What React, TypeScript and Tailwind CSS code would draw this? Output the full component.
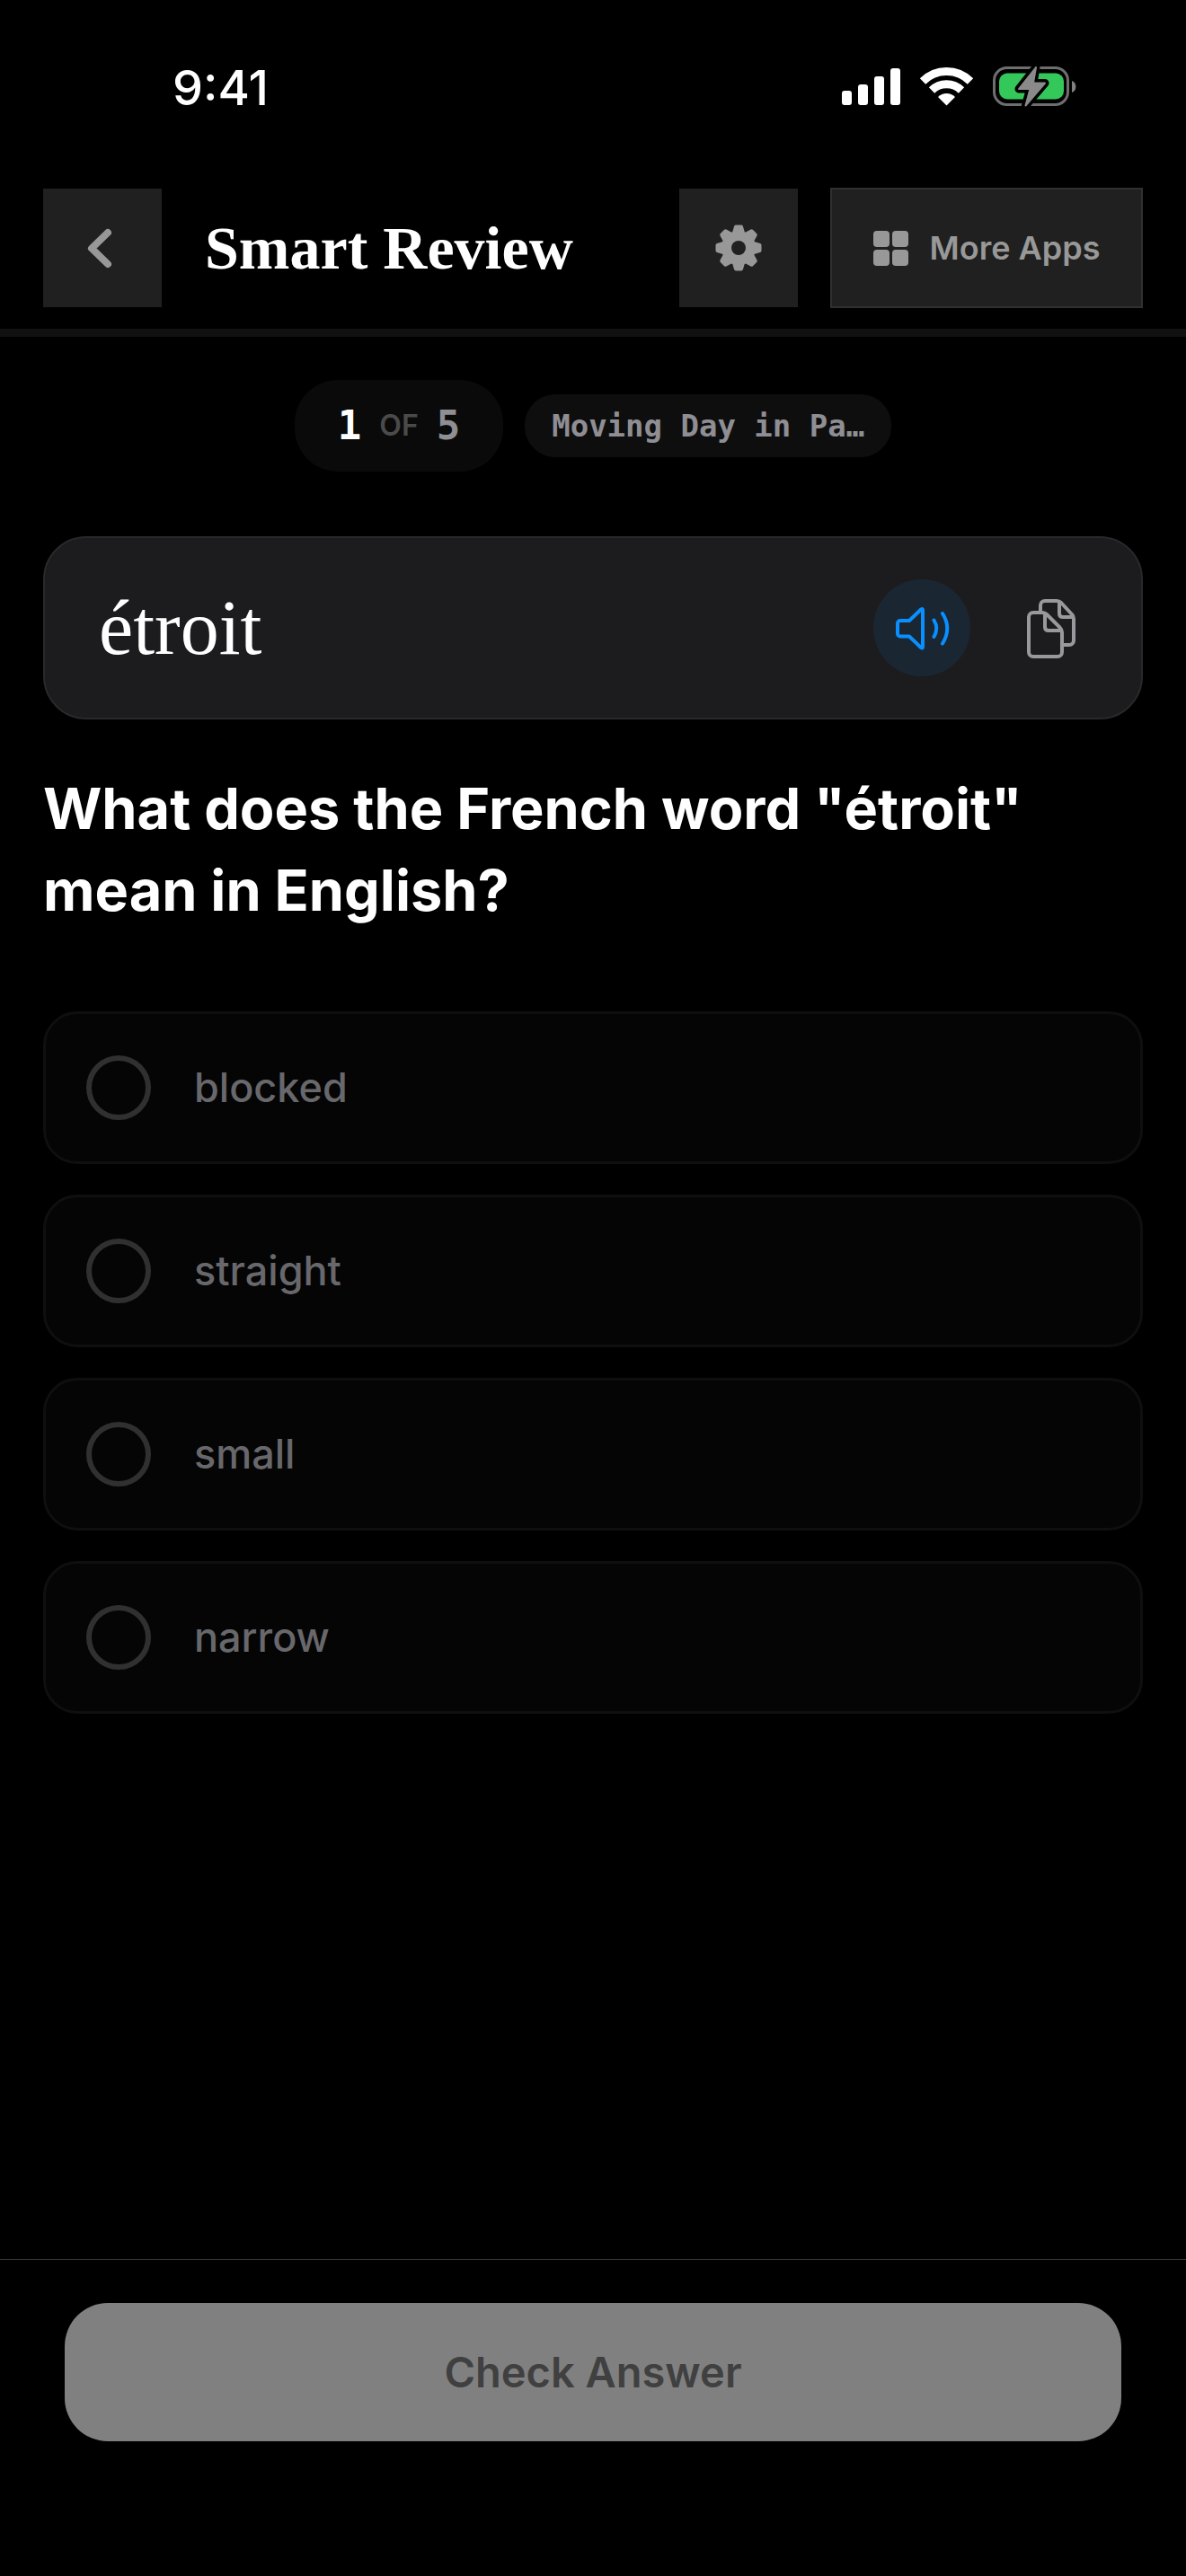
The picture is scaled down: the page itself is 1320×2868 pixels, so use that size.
import { useState } from "react";

const options = ["blocked", "straight", "small", "narrow"];

const StatusBar = () => {
  return (
    <div className="flex items-center justify-between pl-48 pr-[120px] pt-[68px]">
      <span className="text-[54px] leading-[60px] font-medium">9:41</span>
      <svg width="264" height="52" viewBox="0 0 264 52" aria-hidden="true">
        <g fill="#fff">
          <rect x="1" y="29" width="11" height="16" rx="3" />
          <rect x="19" y="22" width="11" height="23" rx="3" />
          <rect x="37" y="13" width="11" height="32" rx="3" />
          <rect x="55" y="4" width="11" height="41" rx="3" />
        </g>
        <g fill="none" stroke="#fff" strokeWidth="9">
          <path d="M91 18.500A37.500 37.500 0 0 1 144 18.500" />
          <path d="M101 28.500A23.500 23.500 0 0 1 134 28.500" />
        </g>
        <path d="M117.500 45.500L108 36A13.500 13.500 0 0 1 127 36Z" fill="#fff" />
        <rect x="170.500" y="3.500" width="82" height="41" rx="14" fill="none" stroke="#6e6e6e" strokeWidth="3" />
        <rect x="176" y="9.500" width="72" height="29" rx="9" fill="#34c759" />
        <path d="M257 18a7 7 0 0 1 0 13z" fill="#808080" />
        <path
          d="M217 3L198 27H210.500L205.500 45.500L227 20.500H214Z"
          fill="#8a8a8a"
          stroke="#000"
          strokeWidth="9"
          strokeLinejoin="round"
          paintOrder="stroke"
        />
        <path
          d="M217 3L198 27H210.500L205.500 45.500L227 20.500H214Z"
          fill="#8a8a8a"
          stroke="#8a8a8a"
          strokeWidth="2"
          strokeLinejoin="round"
        />
      </svg>
    </div>
  );
};

const Header = () => {
  return (
    <header className="flex items-center border-b-9 border-[#111111] px-12 pt-[81px] pb-[23px]">
      <button
        type="button"
        aria-label="Back"
        className="flex size-[132px] shrink-0 items-center justify-center bg-[#202020] text-[#989898]"
      >
        <svg width="48" height="48" viewBox="0 0 48 48" fill="none" aria-hidden="true">
          <path d="M30 7L12 24.500L30 42" stroke="currentColor" strokeWidth="8" strokeLinecap="round" strokeLinejoin="round" />
        </svg>
      </button>
      <h1 className="ml-12 flex-1 font-['Liberation_Serif',serif] text-[68px] leading-[80px] font-bold whitespace-nowrap">
        Smart Review
      </h1>
      <button
        type="button"
        aria-label="Settings"
        className="flex size-[132px] shrink-0 items-center justify-center bg-[#202020] text-[#989898]"
      >
        <svg width="52" height="52" viewBox="0 0 52 52" aria-hidden="true">
          <mask id="gear-hole">
            <rect width="52" height="52" fill="#fff" />
            <circle cx="26" cy="26" r="8" fill="#000" />
          </mask>
          <g fill="currentColor" stroke="currentColor" strokeLinejoin="round" mask="url(#gear-hole)">
            <circle cx="26" cy="26" r="18" strokeWidth="2" />
            {[0, 45, 90, 135, 180, 225, 270, 315].map((angle) => (
              <path key={angle} d="M23 2.500H29L31.500 11H20.500Z" strokeWidth="4" transform={`rotate(${angle} 26 26)`} />
            ))}
          </g>
        </svg>
      </button>
      <button
        type="button"
        className="ml-9 flex h-[134px] w-[348px] shrink-0 items-center justify-center gap-6 border-2 border-[#303030] bg-[#202020] text-[36px] font-semibold whitespace-nowrap text-[#989898]"
      >
        <svg width="39" height="39" viewBox="0 0 39 39" fill="currentColor" aria-hidden="true">
          <rect width="18" height="18" rx="4" />
          <rect x="21" width="18" height="18" rx="4" />
          <rect y="21" width="18" height="18" rx="4" />
          <rect x="21" y="21" width="18" height="18" rx="4" />
        </svg>
        More Apps
      </button>
    </header>
  );
};

const Progress = () => {
  return (
    <div className="flex items-center justify-center gap-6 font-['DejaVu_Sans_Mono',monospace] font-bold">
      <p className="flex h-[102px] items-center gap-5 rounded-[48px] bg-[#0a0a0a] px-12 text-[44px] leading-[52px]">
        <span>1</span>
        <span className="font-['Inter',sans-serif] text-[32px] font-semibold text-[#4a4a4a]">OF</span>
        <span className="text-[#8e8e93]">5</span>
      </p>
      <p className="flex h-[70px] items-center rounded-[34px] bg-[#0e0e0f] px-[30px] text-[34px] leading-10 text-[#8e8e93]">
        Moving Day in Pa…
      </p>
    </div>
  );
};

const WordCard = () => {
  return (
    <section className="mt-[72px] flex items-center rounded-[48px] border-2 border-[#29292b] bg-[#1c1c1e] py-[46px] pr-[46px] pl-[60px]">
      <span lang="fr" className="flex-1 font-['Liberation_Serif',serif] text-[86px] leading-[96px]">
        étroit
      </span>
      <button
        type="button"
        aria-label="Listen"
        className="flex size-[108px] items-center justify-center rounded-full bg-[#1a2733] text-[#0a8fff]"
      >
        <svg width="64" height="52" viewBox="0 0 64 52" fill="none" stroke="currentColor" strokeWidth="4" strokeLinecap="round" strokeLinejoin="round" aria-hidden="true">
          <path d="M5 21a3 3 0 0 1 3-3h10L31 5.500q2-1.500 2 1V47q0 2.500-2 1L18 35.500H8a3 3 0 0 1-3-3Z" />
          <path d="M45.500 17.500q5.500 9 0 18.500M55 10q10.500 16.500 0 33.500" />
        </svg>
      </button>
      <button
        type="button"
        aria-label="Copy"
        className="ml-9 flex size-[108px] items-center justify-center text-[#98989d]"
      >
        <svg width="56" height="68" viewBox="0 0 56 68" fill="none" stroke="currentColor" strokeWidth="4" strokeLinejoin="round" aria-hidden="true">
          <path d="M16 16V9a5 5 0 0 1 5-5h13q3 0 5 2l12 13q2 2 2 5v24a5 5 0 0 1-5 5h-7" />
          <path d="M37 5v13q0 4 4 4h12" />
          <path d="M3 22a5 5 0 0 1 5-5h10q3 0 5 2l14 14q3 3 3 6v22a5 5 0 0 1-5 5H8a5 5 0 0 1-5-5Z" />
          <path d="M21 18v15q0 4 4 4h15" />
        </svg>
      </button>
    </section>
  );
};

const App = () => {
  const [selected, setSelected] = useState("");

  return (
    <div className="flex min-h-screen flex-col bg-black font-['Inter',sans-serif] text-white">
      <StatusBar />
      <Header />

      <main className="flex-1 px-12 pt-12">
        <Progress />
        <WordCard />

        <form id="quiz">
          <fieldset>
            <legend className="pt-[54px] text-[63px] leading-[91px] font-bold">
              What does the French word "étroit" mean in English?
            </legend>
            <div className="mt-[89px] flex flex-col gap-[34px]">
              {options.map((option) => (
                <label
                  key={option}
                  className="flex h-[170px] items-center gap-12 rounded-[38px] border-3 border-[#0f0f0f] bg-[#050505] px-[45px] text-[45px] font-medium text-[#68686c]"
                >
                  <input
                    type="radio"
                    name="answer"
                    value={option}
                    checked={selected === option}
                    onChange={() => setSelected(option)}
                    className="size-[72px] shrink-0 appearance-none rounded-full border-6 border-[#303030] checked:border-[#0a84ff]"
                  />
                  {option}
                </label>
              ))}
            </div>
          </fieldset>
        </form>
      </main>

      <footer className="border-t border-[#3a3a3a] px-[72px] pt-12 pb-[150px]">
        <button
          type="submit"
          form="quiz"
          disabled={!selected}
          className="h-[154px] w-full rounded-[48px] bg-white text-[47px] font-semibold text-black disabled:bg-[#808080] disabled:text-[#404040]"
        >
          Check Answer
        </button>
      </footer>
    </div>
  );
};

export default App;
